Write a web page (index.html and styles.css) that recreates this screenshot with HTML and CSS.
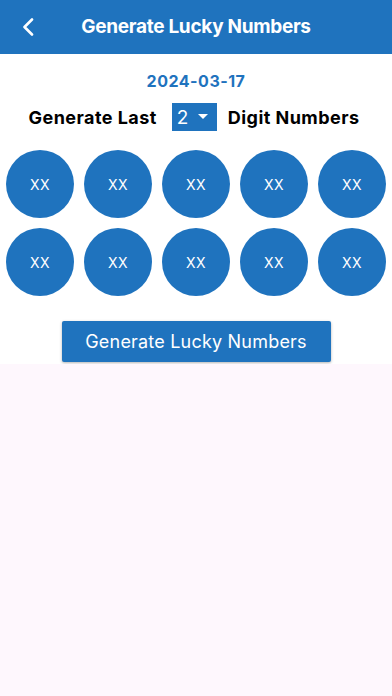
FILE: index.html
```html
<!DOCTYPE html>
<html>
<head>
<meta charset="utf-8">
<link rel="stylesheet" href="styles.css">
</head>
<body>
<header class="appbar">
  <span class="back">
    <svg width="12" height="18" viewBox="0 0 12 18"><path d="M10 1.5 L2.5 9 L10 16.5" fill="none" stroke="#fff" stroke-width="2.6" stroke-linecap="round" stroke-linejoin="round"/></svg>
  </span>
  <h1 class="title">Generate Lucky Numbers</h1>
</header>
<main class="content">
  <div class="date">2024-03-17</div>
  <div class="digits-row">
    <span class="label">Generate Last</span>
    <span class="dropdown"><span class="dd-val">2</span><svg width="10" height="6" viewBox="0 0 10 6"><path d="M0 0 L10 0 L5 5 Z" fill="#fff"/></svg></span>
    <span class="label">Digit Numbers</span>
  </div>
  <div class="balls">
    <div class="ball">XX</div><div class="ball">XX</div><div class="ball">XX</div><div class="ball">XX</div><div class="ball">XX</div>
    <div class="ball">XX</div><div class="ball">XX</div><div class="ball">XX</div><div class="ball">XX</div><div class="ball">XX</div>
  </div>
  <div class="btn-wrap">
    <button class="gen-btn">Generate Lucky Numbers</button>
  </div>
</main>
</body>
</html>
```
FILE: styles.css
```css
html, body {
  margin: 0;
  padding: 0;
  background: #fef7fd;
  font-family: Inter, "Noto Sans", sans-serif;
}
.appbar {
  height: 54px;
  background: #1f73be;
  display: flex;
  align-items: center;
  justify-content: center;
  position: relative;
}
.back {
  position: absolute;
  left: 22px;
  top: 18px;
  display: flex;
}
.title {
  margin: 0;
  color: #fff;
  font-size: 19px;
  font-weight: 700;
  letter-spacing: -0.3px;
  padding-bottom: 1px;
}
.content {
  background: #fff;
  padding-top: 16px;
  padding-bottom: 2px;
  display: flex;
  flex-direction: column;
  align-items: center;
}
.date {
  color: #1f73be;
  font-size: 16px;
  font-weight: 700;
  letter-spacing: 0.5px;
  line-height: 22px;
}
.digits-row {
  margin-top: 11px;
  display: flex;
  align-items: center;
  height: 28px;
  padding-right: 4px;
}
.label {
  font-size: 18px;
  font-weight: 700;
  color: #000;
  letter-spacing: 0.45px;
}
.dropdown {
  margin: 0 11px 0 15px;
  width: 45px;
  height: 28px;
  background: #1f73be;
  display: flex;
  align-items: center;
  box-sizing: border-box;
  padding-left: 5px;
  gap: 10px;
}
.dd-val {
  color: #fff;
  font-size: 19px;
  font-weight: 400;
}
.balls {
  margin-top: 19px;
  display: grid;
  grid-template-columns: repeat(5, 68px);
  gap: 10px;
}
.ball {
  width: 68px;
  height: 68px;
  border-radius: 50%;
  background: #1f73be;
  color: #fff;
  display: flex;
  align-items: center;
  justify-content: center;
  font-size: 14px;
  letter-spacing: 0.5px;
}
.btn-wrap {
  margin-top: 25px;
}
.gen-btn {
  width: 269px;
  height: 41px;
  background: #1f73be;
  color: #fff;
  border: none;
  border-radius: 2px;
  font-family: Inter, "Noto Sans", sans-serif;
  font-size: 18px;
  letter-spacing: 0.2px;
  box-shadow: 0 1px 3px rgba(0,0,0,0.3);
  display: block;
  padding: 0;
}
```
